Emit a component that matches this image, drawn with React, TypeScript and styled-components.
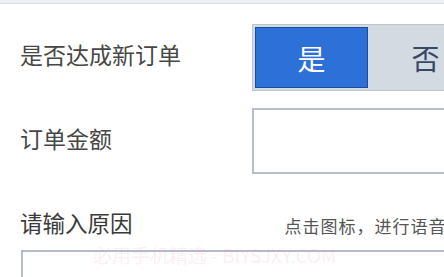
import React, { useState } from "react";
import styled, { createGlobalStyle } from "styled-components";

const GlobalStyle = createGlobalStyle`
  html, body {
    margin: 0;
    padding: 0;
    background: #ffffff;
    overflow: hidden;
  }
  body {
    font-family: "Noto Sans CJK SC", "Noto Sans", sans-serif;
  }
`;

const Page = styled.div`
  position: relative;
  width: 444px;
  height: 277px;
  overflow: hidden;
  background: #ffffff;
`;

const TopBar = styled.div`
  height: 3px;
  background: #eceef2;
  border-bottom: 1px solid #dde1e7;
`;

const Form = styled.div`
  display: flex;
  flex-direction: column;
  padding: 20px 0 0 20px;
`;

const Row = styled.div<{ $mt?: number }>`
  display: grid;
  grid-template-columns: 232px 300px;
  align-items: center;
  margin-top: ${(p) => p.$mt ?? 0}px;
`;

const Label = styled.div<{ $size?: number; $color?: string }>`
  font-size: ${(p) => p.$size ?? 23}px;
  color: ${(p) => p.$color ?? "#474747"};
  line-height: 1;
  white-space: nowrap;
  margin-top: -6px;
`;

const Toggle = styled.div`
  display: flex;
  width: 240px;
  height: 67px;
  box-sizing: border-box;
  border: 1px solid #bcc4cf;
  background: #d4dae2;
  padding: 2px;
  gap: 1px;
`;

const ToggleOption = styled.button<{ $active: boolean }>`
  width: 113px;
  height: 61px;
  box-sizing: border-box;
  border: 1px solid ${(p) => (p.$active ? "#1b4c96" : "transparent")};
  background: ${(p) => (p.$active ? "#2c70d8" : "transparent")};
  color: ${(p) => (p.$active ? "#ffffff" : "#34496a")};
  font-family: "Noto Sans CJK SC", sans-serif;
  font-size: 28px;
  line-height: 1;
  padding: 0;
  cursor: pointer;
  display: flex;
  align-items: center;
  justify-content: center;
`;

const Input = styled.input`
  width: 260px;
  height: 66px;
  box-sizing: border-box;
  border: 2px solid #b7bfcc;
  background: #ffffff;
  outline: none;
  font-size: 20px;
  padding: 0 12px;
`;

const ReasonHeader = styled.div`
  display: flex;
  align-items: center;
  margin-top: 43px;
`;

const Hint = styled.div`
  margin-left: 152px;
  font-size: 17px;
  letter-spacing: 1px;
  color: #555;
  white-space: nowrap;
  line-height: 1;
`;

const TextArea = styled.textarea`
  display: block;
  margin-top: 16px;
  margin-left: 1px;
  width: 440px;
  height: 80px;
  box-sizing: border-box;
  border: 2px solid #b3bbc7;
  resize: none;
  outline: none;
`;

const Watermark = styled.div`
  position: absolute;
  left: 93px;
  top: 245px;
  font-size: 19px;
  line-height: 1;
  color: rgba(240, 150, 185, 0.16);
  white-space: nowrap;
  pointer-events: none;
  font-family: "Noto Sans CJK SC", "Noto Sans", sans-serif;
`;

export default function App() {
  const [yes, setYes] = useState(true);
  return (
    <Page>
      <GlobalStyle />
      <TopBar />
      <Form>
        <Row>
          <Label>是否达成新订单</Label>
          <Toggle>
            <ToggleOption $active={yes} onClick={() => setYes(true)}>
              是
            </ToggleOption>
            <ToggleOption $active={!yes} onClick={() => setYes(false)}>
              否
            </ToggleOption>
          </Toggle>
        </Row>
        <Row $mt={17}>
          <Label>订单金额</Label>
          <Input />
        </Row>
        <ReasonHeader>
          <Label $size={22.5} $color="#3a3a3a">请输入原因</Label>
          <Hint>点击图标，进行语音输入</Hint>
        </ReasonHeader>
        <TextArea />
      </Form>
      <Watermark>必用手机精选 - BIYSJXY.COM</Watermark>
    </Page>
  );
}
